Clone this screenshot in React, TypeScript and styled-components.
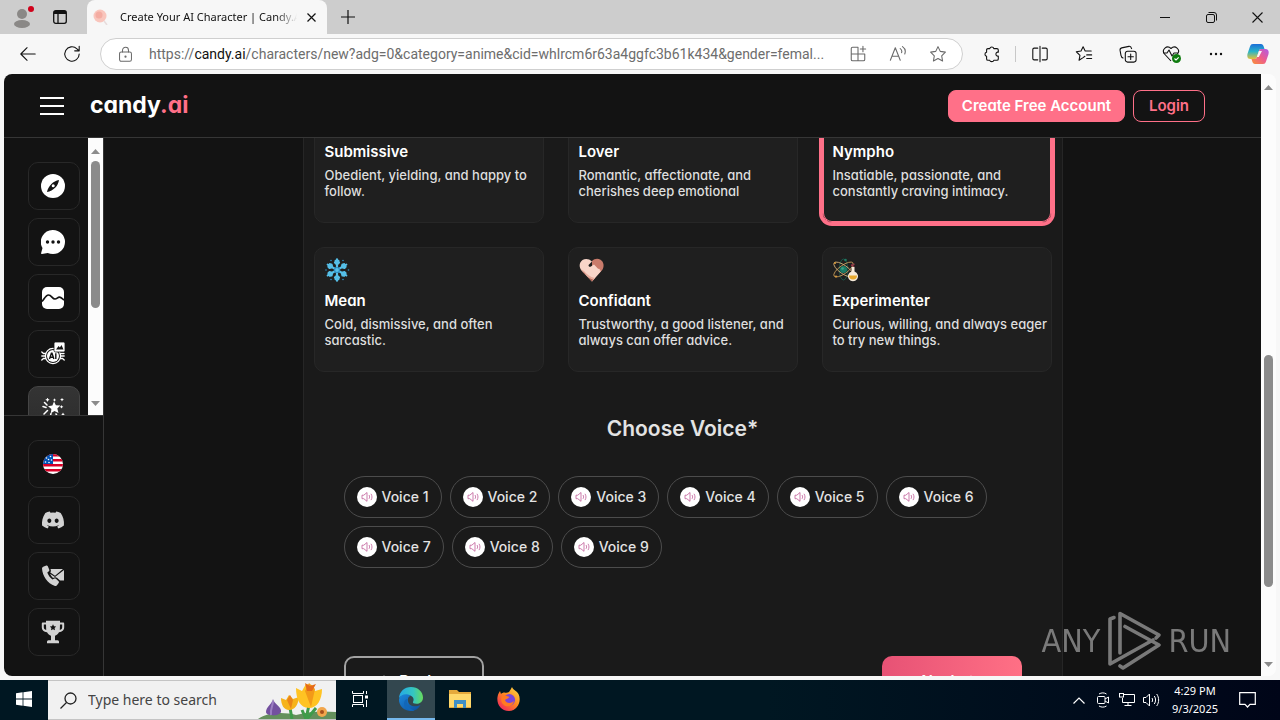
import React, { useState } from "react";
import styled, { createGlobalStyle } from "styled-components";
import { FaDiscord } from "react-icons/fa";

const ui = `"Noto Sans", "Open Sans", sans-serif`;
const brand = `Inter, "Open Sans", sans-serif`;
const pink = "#ff7088";

const GlobalStyle = createGlobalStyle`
  *, *::before, *::after { box-sizing: border-box; }
  body { margin: 0; background: #f7f7f7; font-family: ${ui}; }
  button { font: inherit; color: inherit; background: none; border: 0; padding: 0; margin: 0; cursor: pointer; }
  svg { display: block; flex: none; }
`;

/* ---------- desktop and browser frame ---------- */

const Desktop = styled.div`
  display: flex;
  flex-direction: column;
  height: 100vh;
  overflow: hidden;
`;

const TabStrip = styled.header`
  display: flex;
  flex: none;
  height: 34px;
  background: #cdcdcd;
`;

const StripButton = styled.button<{ $width: number }>`
  display: flex;
  align-items: center;
  justify-content: center;
  width: ${(p) => p.$width}px;
`;

const Tab = styled.div`
  display: flex;
  align-items: center;
  width: 240px;
  margin-left: 11px;
  padding: 0 8px 0 6px;
  background: #f7f7f7;
  border-radius: 8px 8px 0 0;
`;

const TabTitle = styled.span`
  flex: 1;
  margin: 0 6px 0 12px;
  overflow: hidden;
  white-space: nowrap;
  font-size: 11px;
  line-height: 18px;
  color: #111;
  mask-image: linear-gradient(to right, #000 88%, transparent);
`;

const Spacer = styled.div`
  flex: 1;
`;

const Toolbar = styled.div`
  display: flex;
  flex: none;
  align-items: center;
  height: 40px;
  padding: 0 2px 0 6px;
  background: #f7f7f7;
  color: #111;
`;

const ToolButton = styled.button`
  display: flex;
  flex: none;
  align-items: center;
  justify-content: center;
  width: 44px;
  height: 32px;
`;

const CopilotButton = styled(ToolButton)`
  width: 40px;
`;

const ToolDivider = styled.span`
  width: 1px;
  height: 16px;
  margin: 0 2px 0 1px;
  background: #c8c8c8;
`;

const AddressBar = styled.div`
  display: flex;
  flex: 1;
  align-items: center;
  min-width: 0;
  height: 32px;
  margin: 0 7px 0 6px;
  padding-right: 4px;
  background: #fff;
  border: 1px solid #cfcfcf;
  border-radius: 16px;
  color: #6a6a6a;
`;

const LockButton = styled(ToolButton)`
  width: 48px;
`;

const Url = styled.div`
  flex: 1;
  min-width: 0;
  overflow: hidden;
  text-overflow: ellipsis;
  white-space: nowrap;
  font-family: Roboto, ${ui};
  font-size: 14px;
  line-height: 20px;
  color: #6d6d6d;
  outline: none;
`;

const UrlHost = styled.span`
  color: #111;
`;

const AddressButton = styled(ToolButton)`
  width: 40px;
`;

const Viewport = styled.div`
  display: flex;
  flex: 1;
  min-height: 0;
  margin: 0 4px 4px;
  overflow: hidden;
  border-radius: 8px;
  background: #fcfcfc;
`;

/* ---------- scroll bars ---------- */

const ScrollBarBox = styled.div`
  display: flex;
  flex: none;
  flex-direction: column;
  align-items: center;
  width: 15px;
  background: #fcfcfc;
`;

const ScrollArrow = styled.button`
  display: flex;
  align-items: center;
  justify-content: center;
  width: 15px;
  height: 17px;
  padding-top: 9px;
  &:last-child { padding: 0 0 7px; }
`;

const ScrollGap = styled.div<{ $share: number }>`
  flex: ${(p) => p.$share} 0 0;
`;

const ScrollThumb = styled.div<{ $share: number }>`
  flex: ${(p) => p.$share} 0 0;
  width: 9px;
  border-radius: 5px;
  background: #8b8b8b;
`;

const ScrollBar = ({ parts }: { parts: [number, number, number] }) => (
  <ScrollBarBox>
    <ScrollArrow aria-label="Scroll up">
      <svg width="9" height="5" viewBox="0 0 9 5"><path d="M4.500 0 9 5H0z" fill="#8b8b8b" /></svg>
    </ScrollArrow>
    <ScrollGap $share={parts[0]} />
    <ScrollThumb $share={parts[1]} />
    <ScrollGap $share={parts[2]} />
    <ScrollArrow aria-label="Scroll down">
      <svg width="9" height="5" viewBox="0 0 9 5"><path d="M0 0h9L4.500 5z" fill="#8b8b8b" /></svg>
    </ScrollArrow>
  </ScrollBarBox>
);

/* ---------- web page ---------- */

const Site = styled.div`
  display: flex;
  flex: 1;
  flex-direction: column;
  min-width: 0;
  background: #131313;
  color: #fff;
  font-family: ${brand};
  font-feature-settings: "cv11";
`;

const SiteHeader = styled.header`
  display: flex;
  flex: none;
  align-items: center;
  height: 64px;
  padding: 0 56px 0 36px;
  border-bottom: 1px solid #363636;
`;

const Logo = styled.a`
  margin-left: 26px;
  padding-bottom: 2px;
  color: #fff;
  font-size: 23px;
  font-weight: 700;
  line-height: 32px;
  text-decoration: none;
`;

const LogoSuffix = styled.span`
  color: ${pink};
`;

const HeaderButton = styled.button<{ $filled?: boolean; $width: number }>`
  min-width: ${(p) => p.$width}px;
  height: 32px;
  margin-left: 8px;
  border: 1px solid ${pink};
  border-radius: 8px;
  background: ${(p) => (p.$filled ? pink : "transparent")};
  color: ${(p) => (p.$filled ? "#fff" : pink)};
  font-size: 15px;
  font-weight: 600;
  line-height: 20px;
  white-space: nowrap;
`;

const SiteBody = styled.div`
  display: flex;
  flex: 1;
  min-height: 0;
`;

const Sidebar = styled.nav`
  display: flex;
  flex: none;
  flex-direction: column;
  width: 100px;
  border-right: 1px solid #363636;
`;

const SideScroll = styled.div`
  display: flex;
  flex: 1;
  justify-content: space-between;
  min-height: 0;
  overflow: hidden;
`;

const SideList = styled.div`
  display: flex;
  flex-direction: column;
  gap: 8px;
  padding: 24px 0 0 24px;
`;

const SideFooter = styled.div`
  display: flex;
  flex: none;
  flex-direction: column;
  gap: 8px;
  padding: 24px 0 20px 24px;
  border-top: 1px solid #363636;
`;

const SideButton = styled.button<{ $active?: boolean; $muted?: boolean }>`
  display: flex;
  flex: none;
  align-items: center;
  justify-content: center;
  width: 52px;
  height: 48px;
  padding-right: 2px;
  border: 1px solid ${(p) => (p.$active ? "#454545" : "#282828")};
  border-radius: 10px;
  background: ${(p) => (p.$active ? "linear-gradient(#343434, #2c2c2c)" : "#131313")};
  color: ${(p) => (p.$muted ? "#d2d2d2" : "#fff")};
`;

const Main = styled.main`
  flex: 1;
  min-width: 0;
  overflow: hidden;
`;

const Panel = styled.section`
  max-width: 760px;
  margin: -41px auto 0;
  padding: 0 10px 10px;
  background: #1a1a1a;
  border: 1px solid #262626;
`;

const CardGrid = styled.div`
  display: grid;
  grid-template-columns: repeat(3, 1fr);
  gap: 24px;
`;

const Card = styled.button<{ $selected: boolean }>`
  display: flex;
  flex-direction: column;
  align-items: flex-start;
  height: 125px;
  padding: 10px 3px 10px 10px;
  border: 1px solid ${(p) => (p.$selected ? pink : "#272727")};
  border-radius: 10px;
  background: #1f1f1f;
  box-shadow: ${(p) => (p.$selected ? `0 0 0 3px ${pink}, inset 0 0 0 1px ${pink}` : "none")};
  text-align: left;
`;

const CardIcon = styled.span`
  height: 24px;
`;

const CardTitle = styled.span`
  margin: 7px 0 3px;
  font-size: 15px;
  font-weight: 600;
  line-height: 24px;
`;

const CardText = styled.span`
  color: #dedede;
  font-size: 13px;
  font-weight: 500;
  line-height: 16px;
`;

const VoiceHeading = styled.h2`
  margin: 42px 0 32px;
  color: #e3e3e3;
  font-size: 21px;
  font-weight: 600;
  line-height: 30px;
  text-align: center;
`;

const VoiceList = styled.div`
  display: flex;
  flex-wrap: wrap;
  gap: 8px;
  padding: 0 30px;
`;

const VoicePill = styled.button`
  display: flex;
  align-items: center;
  gap: 5px;
  height: 42px;
  padding: 0 12px;
  border: 1px solid #4c4c4c;
  border-radius: 21px;
  color: #e3e3e3;
  font-size: 14px;
  font-weight: 500;
  line-height: 20px;
`;

const StepRow = styled.div`
  display: flex;
  justify-content: space-between;
  padding: 88px 30px 0;
`;

const StepButton = styled.button<{ $primary?: boolean }>`
  display: flex;
  align-items: center;
  justify-content: center;
  gap: 4px;
  width: 140px;
  height: 48px;
  padding-right: ${(p) => (p.$primary ? 0 : 18)}px;
  border: ${(p) => (p.$primary ? "0" : "2px solid #a2a2a2")};
  border-radius: 10px;
  background: ${(p) => (p.$primary ? "linear-gradient(90deg, #e75275, #ff7085)" : "transparent")};
  font-size: 15px;
  font-weight: 600;
`;

/* ---------- watermark ---------- */

const Watermark = styled.div`
  position: absolute;
  right: 49px;
  bottom: 46px;
  display: flex;
  align-items: center;
  gap: 6px;
  color: #858585;
  font-family: "DejaVu Sans Condensed", sans-serif;
  font-size: 32px;
  line-height: 66px;
  opacity: 0.9;
  pointer-events: none;
`;

/* ---------- taskbar ---------- */

const Taskbar = styled.footer`
  display: flex;
  flex: none;
  height: 40px;
  background: linear-gradient(90deg, #001722, #001722 60%, #000518);
  color: #fff;
`;

const TaskButton = styled.button<{ $active?: boolean }>`
  display: flex;
  flex: none;
  align-items: center;
  justify-content: center;
  width: 48px;
  border-bottom: 2px solid ${(p) => (p.$active ? "#76b9ed" : "transparent")};
  background: ${(p) => (p.$active ? "#33474f" : "transparent")};
`;

const PinnedApps = styled.div`
  display: flex;
  gap: 1px;
  margin-left: 3px;
`;

const SearchBox = styled.label`
  display: flex;
  align-items: center;
  width: 288px;
  padding-left: 12px;
  border: 1px solid #c4c4c4;
  border-width: 1px 0;
  background: #f1f1f1;
  color: #222;
`;

const SearchInput = styled.input`
  flex: 1;
  min-width: 0;
  margin-left: 11px;
  padding: 0;
  border: 0;
  outline: none;
  background: transparent;
  font-family: ${ui};
  font-size: 14px;
  line-height: 20px;
  &::placeholder { color: #444; opacity: 1; }
`;

const TrayButton = styled.button`
  display: flex;
  align-items: center;
  justify-content: center;
  width: 24px;
`;

const Clock = styled.button`
  width: 64px;
  font-size: 11px;
  line-height: 18px;
  text-align: center;
`;

const NoticeButton = styled(TrayButton)`
  width: 40px;
  margin-right: 13px;
`;

/* ---------- line icon helper ---------- */

type LineProps = { size?: number; width?: number; children: React.ReactNode };
const Line = ({ size = 18, width = 1.2, children }: LineProps) => (
  <svg width={size} height={size} viewBox="0 0 20 20" fill="none" stroke="currentColor" strokeWidth={width} strokeLinecap="round" strokeLinejoin="round">
    {children}
  </svg>
);

const starPath = "M10 1.800l2.500 5.300 5.700.8-4.100 4.100 1 5.800L10 15l-5.100 2.800 1-5.800-4.100-4.100 5.700-.8z";

/* ---------- site icons ---------- */

const CompassIcon = () => (
  <svg width="24" height="24" viewBox="0 0 24 24">
    <circle cx="12" cy="12" r="12" fill="#fff" />
    <path d="M18 6c-.4 2.800-1.600 5.600-3.600 7.400C12.300 15.500 9 17.500 6 18c.5-3 2.300-6 4.400-8 2-2 4.800-3.600 7.600-4z" fill="#131313" />
    <circle cx="12.200" cy="11.800" r="1.500" fill="#fff" />
  </svg>
);

const ChatIcon = () => (
  <svg width="24" height="24" viewBox="0 0 24 24">
    <path d="M12 0a12 12 0 0 1 0 24c-2 0-3.700-.4-5.300-1.100L1 24c-.8.100-1.100-.5-.8-1.200l1.300-4.700A12 12 0 0 1 12 0z" fill="#fff" />
    <g fill="#131313"><circle cx="6.500" cy="12" r="1.700" /><circle cx="12" cy="12" r="1.700" /><circle cx="17.500" cy="12" r="1.700" /></g>
  </svg>
);

const GalleryIcon = () => (
  <svg width="24" height="24" viewBox="0 0 24 24">
    <rect x="1" y="1" width="22" height="22" rx="5" fill="#fff" />
    <path d="M1 15.500c2-2 3.700-6.500 6.500-6.500 3 0 3.800 4 6.500 4 2 0 2.500-1.800 4.500-1.800 1.700 0 3 1.800 4.500 2.800" fill="none" stroke="#131313" strokeWidth="1.700" />
  </svg>
);

const AiImageIcon = () => (
  <svg width="24" height="24" viewBox="0 0 24 24" fill="none">
    <g stroke="#fff" strokeWidth="1.300" strokeLinecap="round">
      <path d="M4.500 11.500H2.500L.8 10M4 14H.8M4.500 16.500H2.500L.8 18M19.500 16.500h2l1.700 1.500M20 14h3.200M19.500 11.500h3.500" />
      <circle cx="12" cy="14" r="7.600" />
    </g>
    <circle cx="12" cy="14" r="6" fill="#fff" />
    <path d="M8.500 17 10.400 11.200h.6l1.900 5.800M9.200 15.200h3M14.800 11.200V17" stroke="#131313" strokeWidth="1.400" />
    <rect x="13" y="0" width="11" height="10" rx="1.500" fill="#fff" stroke="#131313" strokeWidth=".8" />
    <path d="M15 7.500 17.600 4l1.300 1.400L20.500 3l2 4.500z" fill="#131313" />
  </svg>
);

const MagicIcon = () => (
  <svg width="24" height="24" viewBox="0 0 24 24" fill="#fff">
    <path d="m13 3.500 1.900 3.800 4.400.2-3 3.100 1.200 4.400-4-2-3.700 2.300.6-4.400-3.400-2.700 4.400-.8z" />
    <path d="M6.500-.5 7.200 1 8.600 1.700 7.200 2.400 6.500 3.900 5.800 2.400 4.300 1.700 5.800 1zM13.500.2l.6 1.200 1.200.6-1.200.6-.6 1.200-.6-1.200-1.200-.6 1.200-.6zM21-.2l.6 1.200 1.300.6-1.300.6-.6 1.200-.6-1.200-1.300-.6 1.300-.6zM20.500 7l.6 1.200 1.300.6-1.300.6-.6 1.200-.6-1.200-1.300-.6 1.300-.6zM22 14.500l.6 1.200 1.200.6-1.200.6-.6 1.200-.6-1.200-1.200-.6 1.200-.6z" />
    <path d="M3.500 4.500 6 7M2 8.500l3 1M6.500 12.500 3 16M10 15.500l-1 4M15 16l2.500 4" stroke="#fff" strokeWidth="1.500" strokeLinecap="round" />
  </svg>
);

const FlagIcon = () => (
  <svg width="20" height="20" viewBox="0 0 20 20">
    <defs><clipPath id="flagRound"><circle cx="10" cy="10" r="10" /></clipPath></defs>
    <g clipPath="url(#flagRound)">
      <rect width="20" height="20" fill="#fff" />
      <path d="M0 1.200h20M0 6.200h20M0 11.300h20M0 16.200h20" stroke="#d80027" strokeWidth="2.500" />
      <path d="M0 0h10v10H0z" fill="#0052b4" />
      <g fill="#fff"><circle cx="3.500" cy="4" r=".8" /><circle cx="7.500" cy="2.500" r=".8" /><circle cx="5.500" cy="5.500" r=".8" /><circle cx="8.500" cy="6" r=".8" /><circle cx="2.500" cy="8" r=".8" /><circle cx="6" cy="8.500" r=".8" /></g>
    </g>
  </svg>
);

const ContactIcon = () => (
  <svg width="24" height="24" viewBox="0 0 24 24" fill="#d2d2d2">
    <path d="M2.200 2.800 5.300 1.600c.7-.2 1.200.1 1.500.7l1.500 3.400c.2.600.1 1.100-.4 1.500L6.300 8.600c1 2.900 2.800 5.300 5.200 7l1.900-1c.5-.3 1-.3 1.500.1l2.700 2.500c.5.500.5 1 .2 1.600l-1.600 2.300c-.5.800-1.300 1-2.200.8C6.200 19.500 1.500 12 1 4.600c0-.9.400-1.500 1.200-1.800z" />
    <path d="M9.500 5H22l-8 6.800-4.700-3.300c.7-1.200.8-2 .2-3.500zM23 6v10.500h-4l-3-2.800c-1.200-.8-2.300-.7-4 .2a13 13 0 0 1-3-4.200l5 3.400z" />
  </svg>
);

const TrophyIcon = () => (
  <svg width="24" height="24" viewBox="0 0 24 24" fill="#d2d2d2">
    <path d="M5 .8h14v1.700h3c.8 0 1.200.4 1.200 1.200v3.500c0 3-2.200 4.800-5.200 5-1 1.800-2.500 3-4 3.600v4.400h2.500c1 0 1.500.8 1.500 1.700v1.300H6v-1.300c0-.9.500-1.700 1.500-1.700H10v-4.400c-1.500-.6-3-1.800-4-3.600-3-.2-5.200-2-5.200-5V3.700c0-.8.4-1.200 1.200-1.200h3zM2.800 4.500v2.800c0 1.300.8 2.200 2.400 2.600L5 4.500zm18.400 0H19l-.2 5.400c1.600-.4 2.400-1.300 2.400-2.600z" fillRule="evenodd" />
    <path d="m12 4.200 1 2 2.200.3-1.600 1.600.4 2.200-2-1-2 1 .4-2.200-1.600-1.600 2.200-.3z" fill="#131313" />
  </svg>
);

const SnowflakeIcon = () => (
  <svg width="26" height="24" viewBox="0 0 26 24" fill="none">
    <g stroke="#55bfe8" strokeWidth="2.200" strokeLinecap="round">
      {[0, 60, 120, 180, 240, 300].map((a) => (
        <path key={a} transform={`rotate(${a} 12 12)`} d="M12 12V1.300M12 6.500 10 4.500M12 6.500 14 4.500M12 4l-1.500-1M12 4l1.500-1" />
      ))}
    </g>
    <circle cx="12" cy="12" r="2.500" stroke="#2f8fc4" strokeWidth="1.200" />
    <g fill="#2f8fc4"><circle cx="6" cy="2.500" r=".8" /><circle cx="18" cy="2.500" r=".8" /><circle cx="6" cy="21.500" r=".8" /><circle cx="18" cy="21.500" r=".8" /><circle cx="1" cy="12" r=".8" /><circle cx="23.500" cy="12" r=".8" /></g>
  </svg>
);

const HeartHandsIcon = () => (
  <svg width="26" height="24" viewBox="0 0 26 24">
    <path d="M13 3C15.500.5 19 .3 21.500 1.800c3.500 2.300 4 7 1.500 10.500L13 23z" fill="#c97b6b" />
    <path d="M13 3.500C10 .3 6 .4 3.500 2 0 4.500-.2 9 2.500 12.500L13 23.500l8.500-9.700c.8-1-.2-2-1-1.400.8-1.200-.2-2.200-1.200-1.500L15 6.500l-3.500 2.200c-1.600.6-2.600-1-1.500-2.200z" fill="#f8d5c9" />
    <path d="M1.500 11 13 23.500l3-3.400c-5-1-8.500-4-11-7z" fill="#e7ac9c" />
    <path d="m3 13.500 9.700 9.800 1.800-1.600C9.500 20.500 7 18 5.500 15z" fill="#a95f52" />
  </svg>
);

const ScienceIcon = () => (
  <svg width="26" height="24" viewBox="0 0 26 24" fill="none">
    <ellipse cx="10.500" cy="11.500" rx="4.200" ry="10.500" stroke="#1a5f50" strokeWidth=".8" />
    <ellipse cx="10.500" cy="11.500" rx="4.200" ry="11.500" stroke="#c99d5c" strokeWidth=".8" transform="rotate(55 10.500 11.500)" />
    <ellipse cx="10.500" cy="11.500" rx="4.200" ry="11.500" stroke="#d7b27a" strokeWidth=".8" transform="rotate(-55 10.500 11.500)" />
    <circle cx="10.500" cy="11.500" r="3.600" fill="#1a7a66" /><circle cx="9.500" cy="10.500" r="1.300" fill="#3ba287" />
    <circle cx="12.500" cy="2" r="1.300" fill="#1f7a63" /><circle cx="2" cy="5" r="1.100" fill="#d59a3c" /><circle cx="3" cy="18.500" r="1.100" fill="#d59a3c" />
    <path d="M18.500 9h3v4.500a5 5 0 1 1-3 0z" fill="#f6ead9" />
    <path d="M16 17.500h8a4 4 0 0 1-8 0z" fill="#e8a92e" />
    <circle cx="19" cy="7.300" r="1" fill="#a8324f" /><circle cx="21" cy="6.300" r=".7" fill="#a8324f" /><circle cx="20.700" cy="8.300" r=".7" fill="#a8324f" />
  </svg>
);

const SpeakerIcon = () => (
  <svg width="20" height="20" viewBox="0 0 20 20" fill="none">
    <circle cx="10" cy="10" r="10" fill="#fff" />
    <path d="M5 8.200h1.800L10 5.500v8.800l-3.200-2.600H5zM12 8c.8 1.200.8 2.600 0 3.800M14 6.800c1.300 2 1.300 4.300 0 6.300" stroke="#c05a98" strokeWidth=".8" strokeLinejoin="round" />
  </svg>
);

const RunLogo = () => (
  <svg width="56" height="62" viewBox="0 0 56 62" fill="none" stroke="#858585" strokeWidth="3.600" strokeLinejoin="round" strokeLinecap="round">
    <path d="M8 7.500 4 9v45l43-24" />
    <path d="M14 43V3.500L53 25l-3 3" />
    <path d="M19 16.500 53 35 17 58l-3-2" />
  </svg>
);

/* ---------- desktop icons ---------- */

const FlowersIcon = () => (
  <svg width="80" height="38" viewBox="0 0 80 38">
    <path d="M2 38c10-7 26-7 38-4 14-4 28-4 40-3v7z" fill="#64905c" />
    <path d="M17 18c-1 5-7 8-7 13 0 4 13 5 15 0 1-5-7-8-8-13z" fill="#73509f" /><path d="M17 20c0 5-3 8-2 14" stroke="#9b7dc2" strokeWidth="2" fill="none" />
    <path d="M34 27l2 11M53 24l-3 14M46 29l4 9M60 27l-9 11" stroke="#3f9b4a" strokeWidth="3" />
    <path d="M25 17l5 2 3-5 4 4 6-2c-1 8-4 13-10 13-5 0-8-5-8-12z" fill="#f6b31b" /><path d="m31 19 3-5 3 5-2 9z" fill="#ea8418" />
    <path d="M40 7l6 3 4-7 6 1 3 6 7-2c0 11-5 19-13 19-9 0-13-9-13-20z" fill="#ffc323" /><path d="m49 10 4-8 6 6-4 18z" fill="#f39a18" /><path d="M49 2l5 3 6-2-4 7h-5z" fill="#e56b1b" />
    <circle cx="66" cy="31" r="5" fill="#f2a64c" /><circle cx="66" cy="31" r="2" fill="#a8501c" />
  </svg>
);

const EdgeIcon = () => (
  <svg width="26" height="26" viewBox="0 0 26 26">
    <defs>
      <linearGradient id="edgeTop" x1="0" x2="1"><stop stopColor="#24a8e8" /><stop offset=".6" stopColor="#35c6c0" /><stop offset="1" stopColor="#68db5c" /></linearGradient>
      <linearGradient id="edgeLow" x1="0" x2="1" y1="0" y2="1"><stop stopColor="#1c87dc" /><stop offset="1" stopColor="#0c4e9c" /></linearGradient>
    </defs>
    <path d="M1 12C1.500 5.500 6.500 1 13 1c7 0 12 5 12 10.500 0 4-3 6.300-6.500 6.300-2.800 0-4-1-3.500-2 1.200-1.500 1-5.300-3-6.300C8 8.500 3 9.500 1 12z" fill="url(#edgeTop)" />
    <path d="M1 13c1-4 5.500-5.500 9-4.500 2 .5 3.500 1.700 3.500 1.700-2.500-.7-4 2-3.500 5C10.700 19.500 16 22 22.500 19c-2 3.700-5.500 6-9.500 6C6 25 .5 19.500 1 13z" fill="url(#edgeLow)" />
    <path d="M10 13c-2.500 3-1 9 6.500 11.500C11 26 6 22 6 17.500c0-3 2-5 4-4.500z" fill="#1267b9" />
  </svg>
);

const FolderIcon = () => (
  <svg width="24" height="22" viewBox="0 0 24 22">
    <path d="M1 2h8l2 2h12v16H1z" fill="#e5a93c" /><path d="M1 6h22v13H1z" fill="#ffd86b" />
    <path d="M6 12h12v8h-3v-4H9v4H6z" fill="#3f8fc7" />
  </svg>
);

const FirefoxIcon = () => (
  <svg width="26" height="26" viewBox="0 0 26 26">
    <defs>
      <linearGradient id="foxBody" x1="1" x2=".2" y1="0" y2="1"><stop stopColor="#ffe14a" /><stop offset=".5" stopColor="#ff8a1f" /><stop offset="1" stopColor="#f0245f" /></linearGradient>
    </defs>
    <path d="M16 1c1 3 5 4 6.500 7 3.500 7-1 17-9.500 17S.500 18 1.500 11C2 8 3 6.500 4 5l1 3c1-1 2-1.500 3.500-1.500C10.500 7 12 6.500 13 6c1-1.500 2-3 3-5z" fill="url(#foxBody)" />
    <circle cx="13.300" cy="13.800" r="5.800" fill="#7b45d8" /><path d="M6 10c3-1 5 0 7.500 1-1 2-3.500 1.500-4.500 3 1 3.500 6 4 9 1-1 5-6 6.500-9.500 4.500C5 17.500 4.500 13 6 10z" fill="#ff7a22" />
  </svg>
);

const CopilotIcon = () => (
  <svg width="22" height="22" viewBox="0 0 22 22">
    <defs>
      <linearGradient id="coA" x1="0" y1="0" x2="0" y2="1"><stop stopColor="#1b6ed8" /><stop offset=".5" stopColor="#29b4c8" /><stop offset="1" stopColor="#e4c23a" /></linearGradient>
      <linearGradient id="coB" x1="1" y1="0" x2="0" y2="1"><stop stopColor="#b05be8" /><stop offset=".5" stopColor="#ee5d8c" /><stop offset="1" stopColor="#f99235" /></linearGradient>
    </defs>
    <path d="M6 1h8c1.500 0 2.200 1 2.700 2.500L17.500 6h-3c-1.500 0-2.200.7-2.700 2.200L10 14c-.5 1.600-1.200 2-2.700 2H3.500C.5 16-.2 13.500.6 10.500L3 3.500C3.600 1.800 4.300 1 6 1z" fill="url(#coA)" />
    <path d="M16 21H8c-1.500 0-2.200-1-2.700-2.500L4.500 16h3c1.500 0 2.200-.7 2.700-2.200L12 8c.5-1.600 1.200-2 2.700-2h3.800c3 0 3.700 2.500 2.900 5.500L19 18.500c-.6 1.700-1.300 2.500-3 2.500z" fill="url(#coB)" />
    <path d="M12 8h3l-3.200 6h-2z" fill="#f7f7f7" />
  </svg>
);

/* ---------- data ---------- */

const traits = [
  { name: "Submissive", text: "Obedient, yielding, and happy to follow." },
  { name: "Lover", text: "Romantic, affectionate, and cherishes deep emotional" },
  { name: "Nympho", text: "Insatiable, passionate, and constantly craving intimacy." },
  { name: "Mean", text: "Cold, dismissive, and often sarcastic.", icon: <SnowflakeIcon /> },
  { name: "Confidant", text: "Trustworthy, a good listener, and always can offer advice.", icon: <HeartHandsIcon /> },
  { name: "Experimenter", text: "Curious, willing, and always eager to try new things.", icon: <ScienceIcon /> },
];

const voices = [1, 2, 3, 4, 5, 6, 7, 8, 9];

export default function App() {
  const [trait, setTrait] = useState("Nympho");
  return (
    <Desktop>
      <GlobalStyle />
      <TabStrip>
        <StripButton $width={44} aria-label="Profile">
          <svg width="24" height="24" viewBox="0 0 24 24"><circle cx="12" cy="9" r="5" fill="#8a8886" /><ellipse cx="12" cy="19" rx="8" ry="4" fill="#8a8886" /><circle cx="21" cy="4" r="3" fill="#d0021b" /></svg>
        </StripButton>
        <StripButton $width={32} aria-label="Workspaces">
          <svg width="14" height="14" viewBox="0 0 14 14" fill="none" stroke="#111" strokeWidth="1.300"><rect x=".7" y=".7" width="12.600" height="12.600" rx="2" /><path d="M1 2.500h12" strokeWidth="3" /><path d="M5 3v10" /></svg>
        </StripButton>
        <Tab>
          <svg width="15" height="16" viewBox="0 0 15 16"><circle cx="7" cy="7" r="6.500" fill="#f9c5bc" /><circle cx="6" cy="6" r="3.500" fill="#f4aca2" /><path d="m11 12 3 4" stroke="#e8dcdc" strokeWidth="1.500" /></svg>
          <TabTitle>Create Your AI Character | Candy.AI</TabTitle>
          <StripButton $width={16} aria-label="Close tab">
            <svg width="9" height="9" viewBox="0 0 9 9" stroke="#111" strokeWidth="1.200"><path d="M.5.5l8 8M8.500.5l-8 8" /></svg>
          </StripButton>
        </Tab>
        <StripButton $width={42} aria-label="New tab">
          <svg width="14" height="14" viewBox="0 0 14 14" stroke="#111" strokeWidth="1.200"><path d="M7 0v14M0 7h14" /></svg>
        </StripButton>
        <Spacer />
        <StripButton $width={46} aria-label="Minimize"><svg width="10" height="10" viewBox="0 0 10 10"><path d="M0 5.500h10" stroke="#111" /></svg></StripButton>
        <StripButton $width={46} aria-label="Restore">
          <svg width="11" height="11" viewBox="0 0 11 11" fill="none" stroke="#111"><rect x=".5" y="2.500" width="8" height="8" rx="1.500" /><path d="M2.500.5H8a2.500 2.500 0 0 1 2.500 2.500v5.500" /></svg>
        </StripButton>
        <StripButton $width={46} aria-label="Close"><svg width="11" height="11" viewBox="0 0 11 11" stroke="#111" strokeWidth="1.100"><path d="M.5.5l10 10M10.500.5l-10 10" /></svg></StripButton>
      </TabStrip>

      <Toolbar>
        <ToolButton aria-label="Back"><Line><path d="M18 10H2M9 3l-7 7 7 7" /></Line></ToolButton>
        <ToolButton aria-label="Refresh"><Line><path d="M18 10a8 8 0 1 1-2.500-5.800L18 6.500M18 1.500v5h-5" /></Line></ToolButton>
        <AddressBar>
          <LockButton aria-label="Site information"><Line size={17}><rect x="3" y="7" width="14" height="11" rx="2" /><path d="M6.500 7V5a3.500 3.500 0 0 1 7 0v2" /><circle cx="10" cy="12.500" r=".7" /></Line></LockButton>
          <Url role="textbox" aria-label="Address" tabIndex={0}>
            https://<UrlHost>candy.ai</UrlHost>/characters/new?adg=0&amp;category=anime&amp;cid=whlrcm6r63a4ggfc3b61k434&amp;gender=femal...
          </Url>
          <AddressButton aria-label="Install app"><Line><path d="M10 2.500H4A1.500 1.500 0 0 0 2.500 4v12A1.500 1.500 0 0 0 4 17.500h12a1.500 1.500 0 0 0 1.500-1.500v-6M2.500 10h15M10 2.500v15M15.500 1.500v6M12.500 4.500h6" /></Line></AddressButton>
          <AddressButton aria-label="Read aloud"><Line><path d="M1.500 17 7 3l5.500 14M3.500 12.500h7M12.500 4c1.500 1 2 2.800 1.500 4.500M15 1.800c3 2 3.700 5 2.500 8.200" /></Line></AddressButton>
          <AddressButton aria-label="Add to favorites"><Line><path d={starPath} /></Line></AddressButton>
        </AddressBar>
        <ToolButton aria-label="Extensions"><Line><path d="M7.500 4a2.300 2.300 0 0 1 4.500 0h3.500A1.500 1.500 0 0 1 17 5.500V8c-3.500-.7-3.500 5 0 4.300v3.200a1.500 1.500 0 0 1-1.500 1.500H12c-.5 2-4 2-4.500 0H5.500A1.500 1.500 0 0 1 4 15.500v-3a2.300 2.300 0 0 1 0-4.500V5.500A1.500 1.500 0 0 1 5.500 4z" /></Line></ToolButton>
        <ToolDivider />
        <ToolButton aria-label="Split screen"><Line><path d="M7.500 3.500h-4A1.500 1.500 0 0 0 2 5v10a1.500 1.500 0 0 0 1.500 1.500h4M12.500 3.500h4A1.500 1.500 0 0 1 18 5v10a1.500 1.500 0 0 1-1.500 1.500h-4M10 1.500v17" /></Line></ToolButton>
        <ToolButton aria-label="Favorites"><Line><path d="M11 12.500 9 14l-4.500 3 1-5.500L1.500 7.500l5.200-.8L9 2l2.300 4.700H18M13 11h5.500M13 15h5.500" /></Line></ToolButton>
        <ToolButton aria-label="Collections"><Line><rect x="7" y="7" width="12" height="12" rx="2.500" /><path d="M13 10v6M10 13h6M4.500 14.500C3 14 2.500 13 2.200 11.500L1.200 6C1 4.500 1.700 3.500 3 3.200L11 1.500c1.500-.3 2.500.5 3 2.500" /></Line></ToolButton>
        <ToolButton aria-label="Browser essentials">
          <svg width="20" height="19" viewBox="0 0 20 19" fill="none" stroke="#111" strokeWidth="1.100" strokeLinejoin="round"><path d="M9 16 2.500 9C-1 4.500 5-.5 9 3.500c4-4 10 1 6.500 5.500M1 8h4l2-3 3 6 2-3h4" /><circle cx="14.500" cy="13.500" r="4.500" fill="#107c10" stroke="none" /><path d="m12.500 13.500 1.500 1.500 2.700-2.700" stroke="#fff" /></svg>
        </ToolButton>
        <ToolButton aria-label="Settings and more"><svg width="14" height="4" viewBox="0 0 14 4" fill="#111"><circle cx="2" cy="2" r="1.200" /><circle cx="7" cy="2" r="1.200" /><circle cx="12" cy="2" r="1.200" /></svg></ToolButton>
        <CopilotButton aria-label="Copilot"><CopilotIcon /></CopilotButton>
      </Toolbar>

      <Viewport>
        <Site>
          <SiteHeader>
            <button aria-label="Menu"><svg width="24" height="18" viewBox="0 0 24 18" stroke="#fff" strokeWidth="2"><path d="M0 1h24M0 9h24M0 17h24" /></svg></button>
            <Logo href="#">candy<LogoSuffix>.ai</LogoSuffix></Logo>
            <Spacer />
            <HeaderButton $filled $width={177}>Create Free Account</HeaderButton>
            <HeaderButton $width={72}>Login</HeaderButton>
          </SiteHeader>
          <SiteBody>
            <Sidebar>
              <SideScroll>
                <SideList>
                  <SideButton aria-label="Explore"><CompassIcon /></SideButton>
                  <SideButton aria-label="Chat"><ChatIcon /></SideButton>
                  <SideButton aria-label="Gallery"><GalleryIcon /></SideButton>
                  <SideButton aria-label="Generate image"><AiImageIcon /></SideButton>
                  <SideButton aria-label="Create character" $active><MagicIcon /></SideButton>
                </SideList>
                <ScrollBar parts={[6, 147, 90]} />
              </SideScroll>
              <SideFooter>
                <SideButton aria-label="Language"><FlagIcon /></SideButton>
                <SideButton aria-label="Discord" $muted><FaDiscord size={24} /></SideButton>
                <SideButton aria-label="Contact"><ContactIcon /></SideButton>
                <SideButton aria-label="Affiliate"><TrophyIcon /></SideButton>
              </SideFooter>
            </Sidebar>
            <Main>
              <Panel>
                <CardGrid>
                  {traits.map((t) => (
                    <Card key={t.name} $selected={t.name === trait} aria-pressed={t.name === trait} onClick={() => setTrait(t.name)}>
                      <CardIcon>{t.icon}</CardIcon>
                      <CardTitle>{t.name}</CardTitle>
                      <CardText>{t.text}</CardText>
                    </Card>
                  ))}
                </CardGrid>
                <VoiceHeading>Choose Voice*</VoiceHeading>
                <VoiceList>
                  {voices.map((v) => (
                    <VoicePill key={v}><SpeakerIcon />Voice {v}</VoicePill>
                  ))}
                </VoiceList>
                <StepRow>
                  <StepButton><Line size={22} width={2}><path d="M16 12H5M10 7l-5 5 5 5" /></Line>Back</StepButton>
                  <StepButton $primary>Next<Line size={22} width={2}><path d="M4 12h11M10 7l5 5-5 5" /></Line></StepButton>
                </StepRow>
              </Panel>
            </Main>
          </SiteBody>
        </Site>
        <ScrollBar parts={[264, 232, 72]} />
      </Viewport>

      <Taskbar>
        <TaskButton aria-label="Start"><svg width="16" height="16" viewBox="0 0 16 16" fill="#fff"><path d="M0 2.300 6.600 1.300V7.600H0zM7.400 1.200 16 0v7.600H7.400zM0 8.400h6.600v6.400L0 13.800zM7.400 8.400H16V16l-8.600-1.200z" /></svg></TaskButton>
        <SearchBox>
          <svg width="17" height="17" viewBox="0 0 17 17" fill="none" stroke="#222" strokeWidth="1.300"><circle cx="10.500" cy="6.500" r="5.500" /><path d="M6.500 10.500.5 16.500" /></svg>
          <SearchInput aria-label="Search" placeholder="Type here to search" />
          <FlowersIcon />
        </SearchBox>
        <TaskButton aria-label="Task view">
          <svg width="17" height="16" viewBox="0 0 17 16" fill="none" stroke="#fff"><rect x="1.500" y="4.500" width="9" height="7" /><path d="M.5 0v2.500h11V0M.5 16v-2.500h11V16M14.500 0v3M14.500 9v7" /><path d="M13 4.500h3v3h-3z" fill="#fff" stroke="none" /></svg>
        </TaskButton>
        <PinnedApps>
          <TaskButton aria-label="Microsoft Edge" $active><EdgeIcon /></TaskButton>
          <TaskButton aria-label="File Explorer"><FolderIcon /></TaskButton>
          <TaskButton aria-label="Firefox"><FirefoxIcon /></TaskButton>
        </PinnedApps>
        <Spacer />
        <TrayButton aria-label="Show hidden icons"><svg width="12" height="7" viewBox="0 0 12 7" fill="none" stroke="#fff" strokeWidth="1.200"><path d="m.5 6.500 5.500-5.500 5.500 5.500" /></svg></TrayButton>
        <TrayButton aria-label="Meet now"><svg width="12" height="16" viewBox="0 0 12 16" fill="none" stroke="#fff"><rect x=".5" y="4.500" width="7.500" height="7" rx="1" /><path d="m8 7 3.500-2v6L8 9M2 2c2.500-1.500 5-1.500 7.500 0M2 14c2.500 1.500 5 1.500 7.500 0" /></svg></TrayButton>
        <TrayButton aria-label="Network"><svg width="16" height="14" viewBox="0 0 16 14" fill="none" stroke="#fff"><path d="M5 1.500h10.500v8H3.500V5M9 9.500v3M5.500 12.500h7" /><rect x=".5" y=".5" width="4" height="3.500" /></svg></TrayButton>
        <TrayButton aria-label="Volume"><svg width="17" height="14" viewBox="0 0 17 14" fill="none" stroke="#fff"><path d="M.5 4.500H3l3.500-3.500v12L3 9.500H.5zM9 5c.8 1.300.8 2.700 0 4M11.300 3c1.700 2.500 1.700 5.500 0 8M13.700 1c2.600 3.700 2.600 8.300 0 12" /></svg></TrayButton>
        <Clock>4:29 PM<br />9/3/2025</Clock>
        <NoticeButton aria-label="Notifications"><svg width="17" height="16" viewBox="0 0 17 16" fill="none" stroke="#fff" strokeWidth="1.200"><path d="M.7.7h15.600v11.600h-5.300L8.500 15 6 12.300H.7z" /></svg></NoticeButton>
      </Taskbar>

      <Watermark><span>ANY</span><RunLogo /><span>RUN</span></Watermark>
    </Desktop>
  );
}
